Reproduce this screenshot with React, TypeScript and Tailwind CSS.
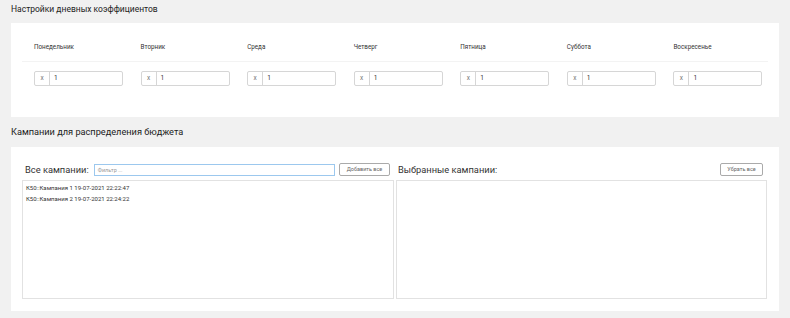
import React from "react";

const days = ["Понедельник", "Вторник", "Среда", "Четверг", "Пятница", "Суббота", "Воскресенье"];

export default function App() {
  return (
    <div className="w-[790px] h-[318px] bg-[#f1f1f1] overflow-hidden text-[#222]" style={{ fontFamily: "Roboto, 'Open Sans', sans-serif" }}>
      <div className="pl-[11px] pr-[11px] pt-[2px]">
        <h2 className="text-[8.5px] leading-[14px] h-[21px] text-[#222]">Настройки дневных коэффициентов</h2>
        <div className="bg-white h-[94px] px-[11px] pt-[19px]">
          <div className="grid grid-cols-7 border-b border-[#f3f3f3] h-[20px]">
            {days.map((d) => (
              <div key={d} className="pl-[12px] text-[6.3px] leading-[10px] text-[#333]">{d}</div>
            ))}
          </div>
          <div className="grid grid-cols-7 pt-[9px]">
            {days.map((d) => (
              <div key={d} className="pl-[12px]">
                <div className="flex w-[89px] h-[15px] border border-[#d6d6d6] rounded-[2px] text-[6.5px] leading-[13px]">
                  <span className="w-[15px] border-r border-[#d6d6d6] text-center text-[#777]">x</span>
                  <span className="pl-[4px] text-[#333]">1</span>
                </div>
              </div>
            ))}
          </div>
        </div>
        <h2 className="text-[9.2px] leading-[14px] pb-[1px] h-[30px] flex items-center text-[#222]">Кампании для распределения бюджета</h2>
        <div className="bg-white h-[164px] px-[11px] pt-[16px]">
          <div className="flex gap-[2px]">
            <div className="w-[372px] flex flex-col">
              <div className="flex items-center h-[13px] pl-[3px] pr-[4px] mb-[4px]">
                <span className="text-[9.3px] leading-[13px] text-[#333] mr-[5px]">Все кампании:</span>
                <div className="flex-1 h-[12px] border border-[#9cc8ee] text-[5.5px] leading-[10px] text-[#999] pl-[3px]">Фильтр ...</div>
                <div className="ml-[4px] w-[51px] h-[13px] border border-[#aaa] rounded-[2px] text-[5.5px] leading-[11px] text-[#666] text-center">Добавить все</div>
              </div>
              <div className="h-[119px] border border-[#e2e2e2] px-[3px] pt-[1px] text-[6px] leading-[11px] text-[#333]">
                <div>К50::Кампания 1 19-07-2021 22:22:47</div>
                <div>К50::Кампания 2 19-07-2021 22:24:22</div>
              </div>
            </div>
            <div className="w-[371px] flex flex-col">
              <div className="flex items-center justify-between h-[13px] pl-[2px] pr-[4px] mb-[4px]">
                <span className="text-[9.3px] leading-[13px] text-[#333]">Выбранные кампании:</span>
                <div className="w-[43px] h-[13px] border border-[#aaa] rounded-[2px] text-[5.5px] leading-[11px] text-[#666] text-center">Убрать все</div>
              </div>
              <div className="h-[119px] border border-[#e2e2e2]"></div>
            </div>
          </div>
        </div>
      </div>
    </div>
  );
}
